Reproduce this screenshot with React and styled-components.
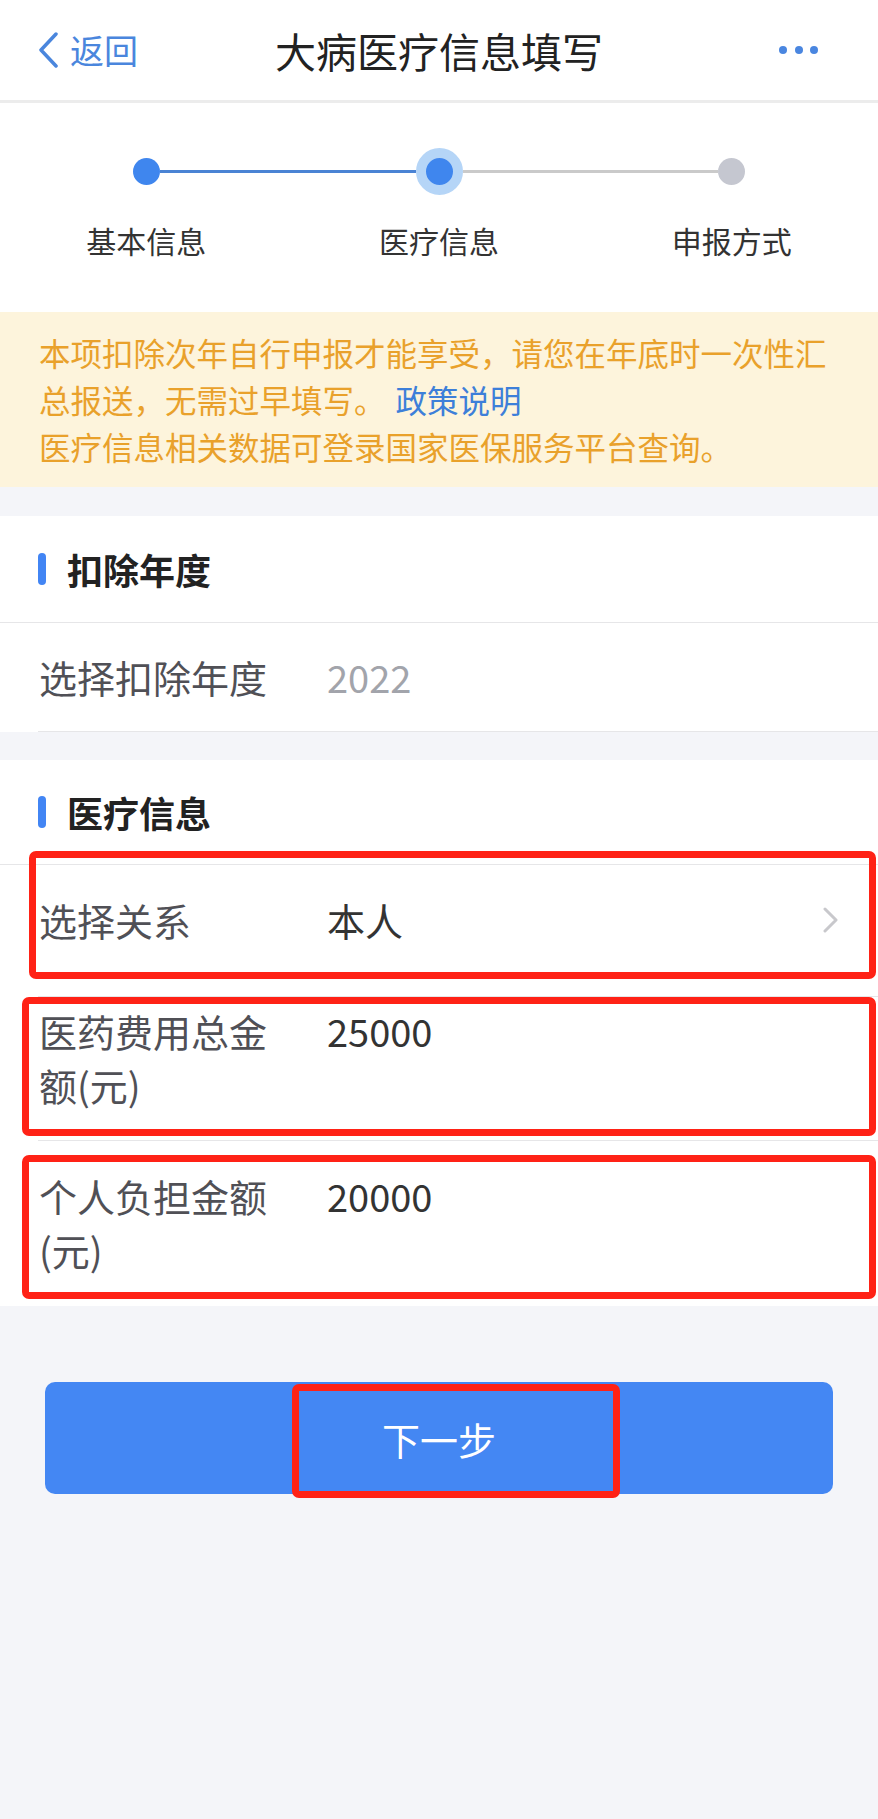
import styled, { createGlobalStyle } from 'styled-components';

const GlobalStyle = createGlobalStyle`
  body {
    margin: 0;
    background: #f4f5f9;
    font-family: "Noto Sans CJK SC", "Noto Sans", sans-serif;
    color: #333;
  }
`;

const Page = styled.div`
  width: 878px;
  min-height: 1819px;
  background: #f4f5f9;
`;

const Header = styled.header`
  display: grid;
  grid-template-columns: 1fr auto 1fr;
  align-items: center;
  height: 100px;
  background: #fff;
  border-bottom: 3px solid #ececec;
`;

const BackButton = styled.div`
  display: flex;
  align-items: center;
  gap: 11px;
  padding-left: 37px;
  color: #4a86dd;
  font-size: 34px;
  line-height: 1;
`;

const Title = styled.h1`
  margin: 0;
  font-size: 41px;
  font-weight: 400;
  color: #222;
  line-height: 1;
`;

const MoreDots = styled.div`
  display: flex;
  justify-content: flex-end;
  gap: 7.5px;
  padding-right: 60px;

  span {
    width: 8px;
    height: 8px;
    border-radius: 50%;
    background: #4a86e0;
  }
`;

const Stepper = styled.div`
  display: grid;
  grid-template-columns: repeat(3, 1fr);
  background: #fff;
  padding: 45px 0 52px;
`;

const Step = styled.div`
  display: flex;
  flex-direction: column;
  align-items: center;
  gap: 25px;
`;

const Track = styled.div`
  display: flex;
  align-items: center;
  width: 100%;
  height: 47px;
`;

const TrackLine = styled.div`
  flex: 1;
  height: 3px;
  background: ${({ $tone }) =>
    $tone === 'done' ? '#4a83d4' : $tone === 'todo' ? '#cacaca' : 'transparent'};
`;

const Dot = styled.div`
  flex: none;
  width: 27px;
  height: 27px;
  border-radius: 50%;
  background: ${({ $state }) => ($state === 'todo' ? '#c5c7d0' : '#3f86ee')};
  ${({ $state }) =>
    $state === 'current' &&
    `
    border: 10px solid #b5d5f7;
    `}
`;

const StepLabel = styled.div`
  font-size: 30px;
  line-height: 40px;
  color: #333;
`;

const Notice = styled.div`
  background: #fdf4dc;
  padding: 17px 40px 17px 39px;
  font-size: 31.5px;
  line-height: 47px;
  color: #e9a12b;
`;

const NoticeLink = styled.span`
  color: #3d7fd9;
  margin-left: 10px;
`;

const Section = styled.section`
  background: #fff;
  margin-top: ${({ $gap }) => $gap}px;
`;

const SectionHead = styled.div`
  display: flex;
  align-items: center;
  gap: 21px;
  height: ${({ $h }) => $h}px;
  padding-left: 38px;
  border-bottom: 1px solid #e6e6e8;
  font-size: 36px;
  font-weight: 700;
  color: #222;

  &::before {
    content: '';
    width: 8px;
    height: 32px;
    border-radius: 4px;
    background: #4285f4;
  }
`;

const Row = styled.div`
  position: relative;
  display: flex;
  align-items: flex-start;
  padding: ${({ $pt }) => $pt}px 39px ${({ $pb }) => $pb}px 39px;

  ${({ $divider }) =>
    $divider &&
    `
    &::after {
      content: '';
      position: absolute;
      left: 38px;
      right: 0;
      bottom: 0;
      height: 1px;
      background: #e6e6e8;
    }
  `}
`;

const Label = styled.div`
  flex: none;
  width: 240px;
  margin-right: 48px;
  font-size: 38px;
  line-height: 54px;
  color: #505056;
`;

const Value = styled.div`
  flex: 1;
  font-size: 38px;
  line-height: 54px;
  color: ${({ $muted }) => ($muted ? '#a2a4ab' : '#333')};
`;

const Arrow = styled.div`
  display: flex;
  align-items: center;
  height: 54px;
`;

const Mark = styled.div`
  position: absolute;
  top: ${({ $top }) => $top}px;
  bottom: ${({ $bottom }) => $bottom}px;
  left: ${({ $left }) => $left}px;
  right: ${({ $right }) => $right}px;
  border: 7px solid #ff2216;
  border-radius: 7px;
  pointer-events: none;
`;

const Footer = styled.div`
  padding: 76px 45px 0;
`;

const NextButton = styled.button`
  position: relative;
  display: flex;
  align-items: center;
  justify-content: center;
  width: 100%;
  height: 112px;
  border: none;
  border-radius: 10px;
  background: #4487f3;
  color: #fff;
  font-family: inherit;
  font-size: 38px;
`;

function ChevronLeft() {
  return (
    <svg width="22" height="36" viewBox="0 0 22 36">
      <polyline
        points="19,2 4,18 19,34"
        fill="none"
        stroke="#4a86dd"
        strokeWidth="3.5"
        strokeLinecap="round"
        strokeLinejoin="round"
      />
    </svg>
  );
}

function ChevronRight() {
  return (
    <svg width="17" height="26" viewBox="0 0 17 26">
      <polyline
        points="3,2 14,13 3,24"
        fill="none"
        stroke="#c8c8cc"
        strokeWidth="3"
        strokeLinecap="round"
        strokeLinejoin="round"
      />
    </svg>
  );
}

const steps = [
  { label: '基本信息', state: 'done', left: null, right: 'done' },
  { label: '医疗信息', state: 'current', left: 'done', right: 'todo' },
  { label: '申报方式', state: 'todo', left: 'todo', right: null },
];

export default function App() {
  return (
    <Page>
      <GlobalStyle />
      <Header>
        <BackButton>
          <ChevronLeft />
          返回
        </BackButton>
        <Title>大病医疗信息填写</Title>
        <MoreDots>
          <span />
          <span />
          <span />
        </MoreDots>
      </Header>

      <Stepper>
        {steps.map((s) => (
          <Step key={s.label}>
            <Track>
              <TrackLine $tone={s.left} />
              <Dot $state={s.state} />
              <TrackLine $tone={s.right} />
            </Track>
            <StepLabel>{s.label}</StepLabel>
          </Step>
        ))}
      </Stepper>

      <Notice>
        本项扣除次年自行申报才能享受，请您在年底时一次性汇总报送，无需过早填写。
        <NoticeLink>政策说明</NoticeLink>
        <br />
        医疗信息相关数据可登录国家医保服务平台查询。
      </Notice>

      <Section $gap={29}>
        <SectionHead $h={106}>扣除年度</SectionHead>
        <Row $pt={27} $pb={28} $divider>
          <Label>选择扣除年度</Label>
          <Value $muted>2022</Value>
        </Row>
      </Section>

      <Section $gap={28}>
        <SectionHead $h={104}>医疗信息</SectionHead>
        <Row $pt={28} $pb={50} $divider>
          <Label>选择关系</Label>
          <Value>本人</Value>
          <Arrow>
            <ChevronRight />
          </Arrow>
          <Mark $top={-14} $bottom={18} $left={29} $right={2} />
        </Row>
        <Row $pt={7} $pb={29} $divider>
          <Label>医药费用总金额(元)</Label>
          <Value>25000</Value>
          <Mark $top={0} $bottom={5} $left={22} $right={2} />
        </Row>
        <Row $pt={28} $pb={29}>
          <Label>个人负担金额(元)</Label>
          <Value>20000</Value>
          <Mark $top={14} $bottom={7} $left={22} $right={2} />
        </Row>
      </Section>

      <Footer>
        <NextButton>
          下一步
          <Mark $top={2} $bottom={-4} $left={247} $right={213} />
        </NextButton>
      </Footer>
    </Page>
  );
}
